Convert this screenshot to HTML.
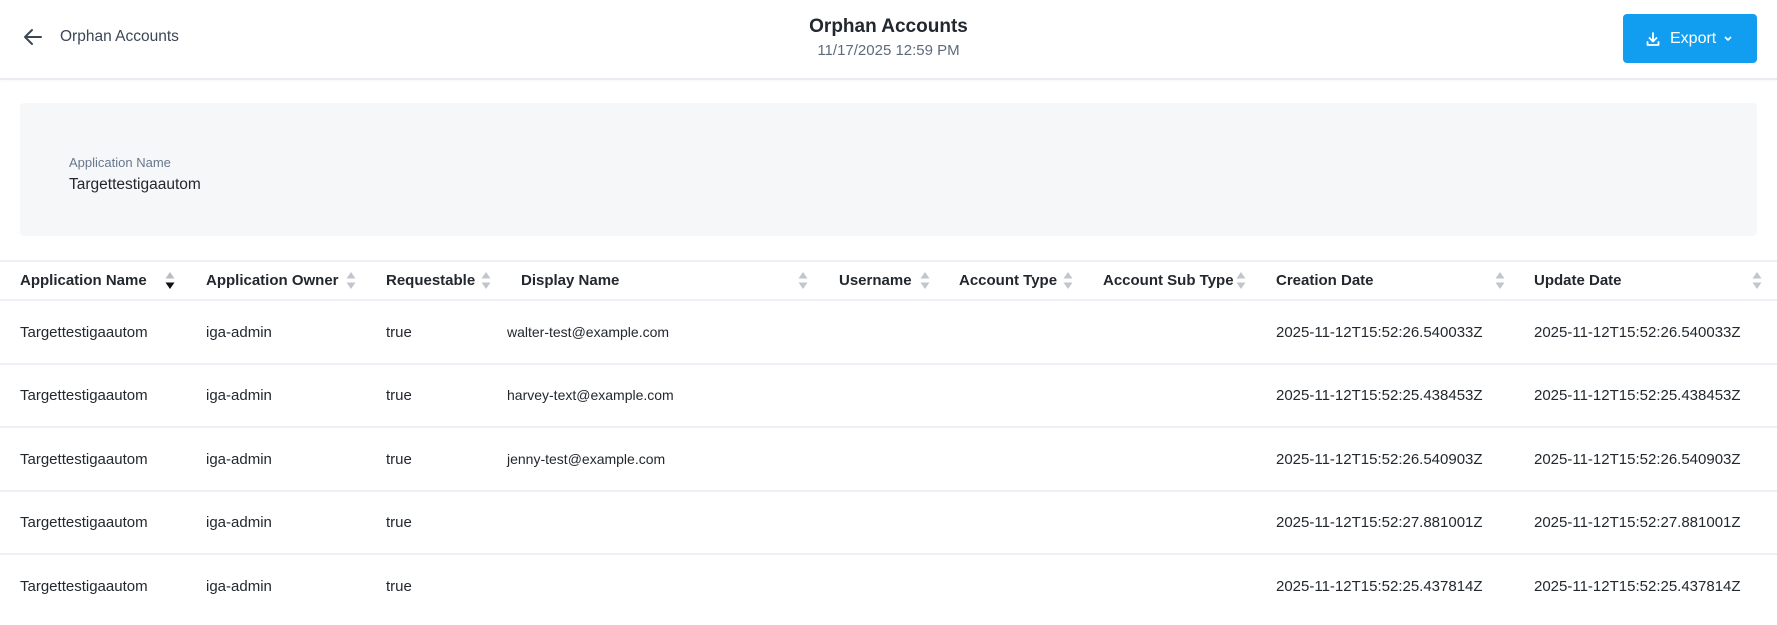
<!DOCTYPE html>
<html><head><meta charset="utf-8"><style>
*{margin:0;padding:0;box-sizing:border-box}
body{width:1777px;height:625px;overflow:hidden;background:#fff;font-family:"Liberation Sans",sans-serif;color:#23282e;position:relative}
.a{position:absolute;white-space:nowrap}
.hdr{font-weight:bold;font-size:15px;top:272px;color:#23282e}
.cell{font-size:15px;color:#23282e}
.line{position:absolute;left:0;width:1777px;height:2px;background:#edf1f5}
.sort{position:absolute;top:271px;width:10px;height:19px}
</style></head><body>
<svg class="a" style="left:23px;top:28px" width="20" height="18" viewBox="0 0 20 18"><path d="M18 9H3M9 2L2 9l7 7" fill="none" stroke="#3b4656" stroke-width="2" stroke-linecap="round" stroke-linejoin="round"/></svg>
<div class="a" style="left:60px;top:28px;font-size:15.5px;color:#3b4656">Orphan Accounts</div>
<div class="a" style="left:0;width:1777px;text-align:center;top:16px;font-size:19px;font-weight:bold;color:#23282e">Orphan Accounts</div>
<div class="a" style="left:0;width:1777px;text-align:center;top:42px;font-size:15px;color:#5e6b7d">11/17/2025 12:59 PM</div>
<div class="a" style="left:1623px;top:14px;width:134px;height:49px;background:#129ef0;border-radius:4px"></div>
<svg class="a" style="left:1645px;top:31px" width="16" height="16" viewBox="0 0 16 16"><path d="M8 2v8M4.5 7L8 10.5 11.5 7M2.5 11v3h11v-3" fill="none" stroke="#fff" stroke-width="1.8" stroke-linecap="round" stroke-linejoin="round"/></svg>
<div class="a" style="left:1670px;top:30px;font-size:16px;color:#fff">Export</div>
<svg class="a" style="left:1723px;top:35px" width="10" height="8" viewBox="0 0 10 8"><path d="M2 2l3 3 3-3" fill="none" stroke="#fff" stroke-width="1.6"/></svg>
<div class="a" style="left:0;top:78px;width:1777px;height:2px;background:#e8ebef;box-shadow:0 1px 2px rgba(0,0,0,.04)"></div>
<div class="a" style="left:20px;top:103px;width:1737px;height:133px;background:#f6f7f9;border-radius:4px"></div>
<div class="a" style="left:69px;top:155px;font-size:13px;color:#68778c">Application Name</div>
<div class="a" style="left:69px;top:176px;font-size:15.5px;color:#23282e">Targettestigaautom</div>
<div class="line" style="top:260px"></div>
<div class="line" style="top:299px"></div>
<div class="a hdr" style="left:20px">Application Name</div>
<div class="a hdr" style="left:206px">Application Owner</div>
<div class="a hdr" style="left:386px">Requestable</div>
<div class="a hdr" style="left:521px">Display Name</div>
<div class="a hdr" style="left:839px">Username</div>
<div class="a hdr" style="left:959px">Account Type</div>
<div class="a hdr" style="left:1103px">Account Sub Type</div>
<div class="a hdr" style="left:1276px">Creation Date</div>
<div class="a hdr" style="left:1534px">Update Date</div>
<svg class="sort" style="left:165px" viewBox="0 0 10 19"><path d="M5 1L9.5 7.5H.5z" fill="#b9bec5"/><path d="M5 18L9.5 11.5H.5z" fill="#111"/></svg>
<svg class="sort" style="left:346px" viewBox="0 0 10 19"><path d="M5 1L9.5 7.5H.5zM5 18L9.5 11.5H.5z" fill="#c2c6cc"/></svg>
<svg class="sort" style="left:481px" viewBox="0 0 10 19"><path d="M5 1L9.5 7.5H.5zM5 18L9.5 11.5H.5z" fill="#c2c6cc"/></svg>
<svg class="sort" style="left:798px" viewBox="0 0 10 19"><path d="M5 1L9.5 7.5H.5zM5 18L9.5 11.5H.5z" fill="#c2c6cc"/></svg>
<svg class="sort" style="left:920px" viewBox="0 0 10 19"><path d="M5 1L9.5 7.5H.5zM5 18L9.5 11.5H.5z" fill="#c2c6cc"/></svg>
<svg class="sort" style="left:1063px" viewBox="0 0 10 19"><path d="M5 1L9.5 7.5H.5zM5 18L9.5 11.5H.5z" fill="#c2c6cc"/></svg>
<svg class="sort" style="left:1236px" viewBox="0 0 10 19"><path d="M5 1L9.5 7.5H.5zM5 18L9.5 11.5H.5z" fill="#c2c6cc"/></svg>
<svg class="sort" style="left:1495px" viewBox="0 0 10 19"><path d="M5 1L9.5 7.5H.5zM5 18L9.5 11.5H.5z" fill="#c2c6cc"/></svg>
<svg class="sort" style="left:1752px" viewBox="0 0 10 19"><path d="M5 1L9.5 7.5H.5zM5 18L9.5 11.5H.5z" fill="#c2c6cc"/></svg>

<div class="line" style="top:363px"></div>
<div class="line" style="top:426px"></div>
<div class="line" style="top:490px"></div>
<div class="line" style="top:553px"></div>

<div class="a cell" style="left:20px;top:324px">Targettestigaautom</div><div class="a cell" style="left:206px;top:324px">iga-admin</div><div class="a cell" style="left:386px;top:324px">true</div><div class="a cell" style="left:507px;top:324px;font-size:14px">walter-test@example.com</div><div class="a cell" style="left:1276px;top:324px">2025-11-12T15:52:26.540033Z</div><div class="a cell" style="left:1534px;top:324px">2025-11-12T15:52:26.540033Z</div>
<div class="a cell" style="left:20px;top:387px">Targettestigaautom</div><div class="a cell" style="left:206px;top:387px">iga-admin</div><div class="a cell" style="left:386px;top:387px">true</div><div class="a cell" style="left:507px;top:387px;font-size:14px">harvey-text@example.com</div><div class="a cell" style="left:1276px;top:387px">2025-11-12T15:52:25.438453Z</div><div class="a cell" style="left:1534px;top:387px">2025-11-12T15:52:25.438453Z</div>
<div class="a cell" style="left:20px;top:451px">Targettestigaautom</div><div class="a cell" style="left:206px;top:451px">iga-admin</div><div class="a cell" style="left:386px;top:451px">true</div><div class="a cell" style="left:507px;top:451px;font-size:14px">jenny-test@example.com</div><div class="a cell" style="left:1276px;top:451px">2025-11-12T15:52:26.540903Z</div><div class="a cell" style="left:1534px;top:451px">2025-11-12T15:52:26.540903Z</div>
<div class="a cell" style="left:20px;top:514px">Targettestigaautom</div><div class="a cell" style="left:206px;top:514px">iga-admin</div><div class="a cell" style="left:386px;top:514px">true</div><div class="a cell" style="left:1276px;top:514px">2025-11-12T15:52:27.881001Z</div><div class="a cell" style="left:1534px;top:514px">2025-11-12T15:52:27.881001Z</div>
<div class="a cell" style="left:20px;top:578px">Targettestigaautom</div><div class="a cell" style="left:206px;top:578px">iga-admin</div><div class="a cell" style="left:386px;top:578px">true</div><div class="a cell" style="left:1276px;top:578px">2025-11-12T15:52:25.437814Z</div><div class="a cell" style="left:1534px;top:578px">2025-11-12T15:52:25.437814Z</div>
</body></html>
